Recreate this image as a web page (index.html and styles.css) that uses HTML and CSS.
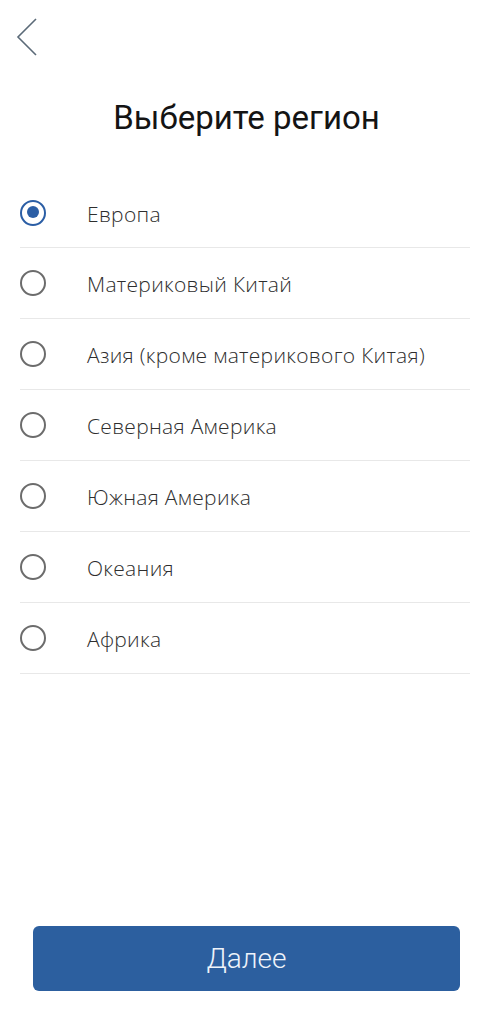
FILE: index.html
```html
<!DOCTYPE html>
<html lang="ru">
<head>
    <meta charset="UTF-8">
    <meta name="viewport" content="width=device-width, initial-scale=1.0">
    <title>Выберите регион</title>
    <link rel="stylesheet" href="styles.css">
</head>
<body>
    <div class="page">
        <header class="topbar">
            <a href="#" class="back">
                <svg width="24" height="40" viewBox="0 0 24 40">
                    <path d="M20 1 L2 19 L20 37" fill="none" stroke="#5b6a78" stroke-width="1.6"/>
                </svg>
            </a>
        </header>

        <h1 class="title">Выберите регион</h1>

        <ul class="regions">
            <li class="region selected"><span class="radio"></span><span class="label">Европа</span></li>
            <li class="region"><span class="radio"></span><span class="label">Материковый Китай</span></li>
            <li class="region"><span class="radio"></span><span class="label">Азия (кроме материкового Китая)</span></li>
            <li class="region"><span class="radio"></span><span class="label">Северная Америка</span></li>
            <li class="region"><span class="radio"></span><span class="label">Южная Америка</span></li>
            <li class="region"><span class="radio"></span><span class="label">Океания</span></li>
            <li class="region"><span class="radio"></span><span class="label">Африка</span></li>
        </ul>

        <div class="footer">
            <button class="next-btn">Далее</button>
        </div>
    </div>

    <script>
        document.querySelectorAll(".region").forEach(item => {
            item.addEventListener("click", () => {
                document.querySelectorAll(".region").forEach(r => r.classList.remove("selected"));
                item.classList.add("selected");
            });
        });
    </script>
</body>
</html>
```

FILE: styles.css
```css
body {
    margin: 0;
    padding: 0;
    background-color: #ffffff;
    font-family: "Open Sans", Arial, sans-serif;
}
.page {
    display: flex;
    flex-direction: column;
    min-height: 1024px;
}
.topbar {
    height: 75px;
    padding: 18px 0 0 16px;
    box-sizing: border-box;
}
.back {
    display: inline-block;
}
.title {
    margin: 17px 0 0;
    text-align: center;
    font-family: Roboto, Arial, sans-serif;
    font-weight: 400;
    font-size: 33px;
    line-height: 52px;
    color: #141414;
}
.regions {
    list-style: none;
    margin: 34px 23px 0 20px;
    padding: 0;
}
.region {
    display: flex;
    align-items: center;
    gap: 41px;
    height: 70px;
    border-bottom: 1px solid #e8e8e8;
    cursor: pointer;
}
.region:first-child {
    height: 69px;
}
.radio {
    width: 26px;
    height: 26px;
    box-sizing: border-box;
    border: 2.5px solid #6c6c6c;
    border-radius: 50%;
    flex-shrink: 0;
    position: relative;
}
.region.selected .radio {
    border-color: #2b5ea5;
}
.region.selected .radio::after {
    content: "";
    position: absolute;
    left: 4.5px;
    top: 4.5px;
    width: 12px;
    height: 12px;
    border-radius: 50%;
    background-color: #2b5ea5;
}
.label {
    font-size: 21px;
    font-weight: 300;
    letter-spacing: 0.3px;
    color: #2e2e2e;
    padding-top: 2px;
}
.footer {
    margin-top: auto;
    padding: 0 33px 33px 33px;
}
.next-btn {
    width: 100%;
    height: 65px;
    border: none;
    border-radius: 6px;
    background-color: #2c5f9f;
    color: #eef3fa;
    font-family: Roboto, Arial, sans-serif;
    font-weight: 300;
    font-size: 28px;
    cursor: pointer;
}
```
